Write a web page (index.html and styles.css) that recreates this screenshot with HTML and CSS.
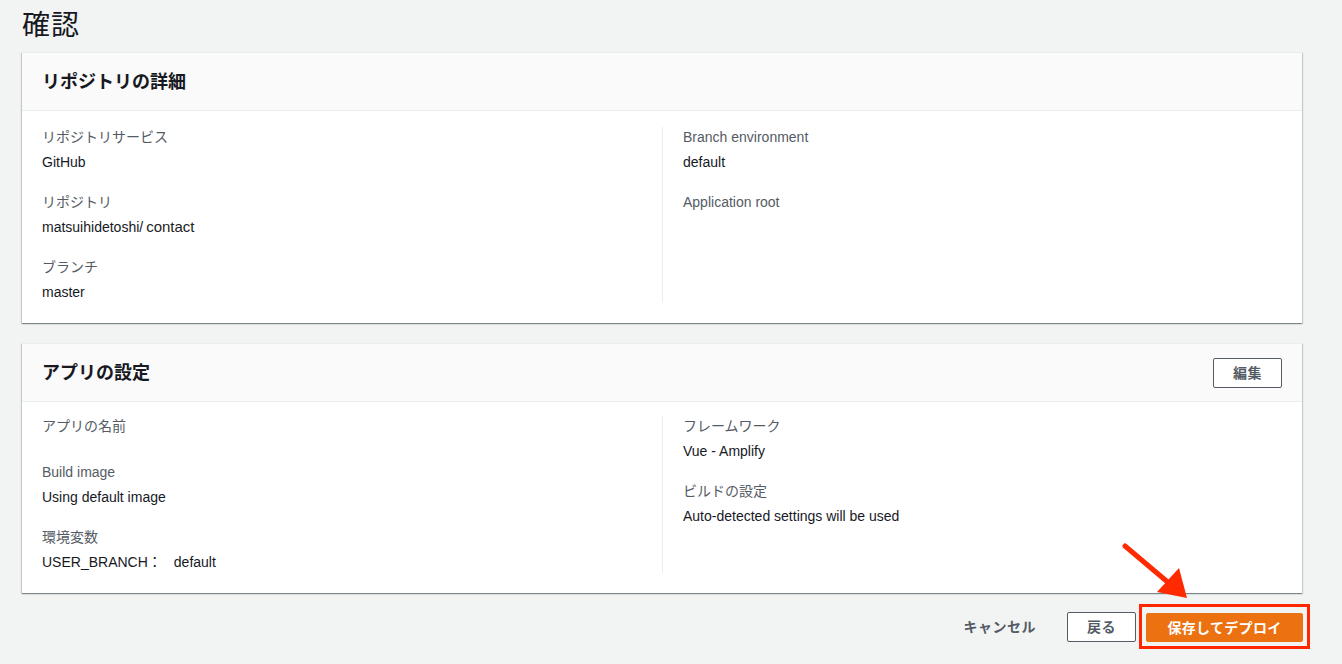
FILE: index.html
```html
<!DOCTYPE html>
<html lang="ja">
<head>
<meta charset="utf-8">
<title>確認</title>
<link rel="stylesheet" href="styles.css">
</head>
<body>
<div class="page">
  <h1 class="title">確認</h1>

  <section class="card">
    <div class="card-header">
      <h2>リポジトリの詳細</h2>
    </div>
    <div class="card-body">
      <div class="col">
        <div class="pair"><div class="label">リポジトリサービス</div><div class="value">GitHub</div></div>
        <div class="pair"><div class="label">リポジトリ</div><div class="value">matsuihidetoshi/<span class="alt">contact</span></div></div>
        <div class="pair"><div class="label">ブランチ</div><div class="value">master</div></div>
      </div>
      <div class="col col-right">
        <div class="pair"><div class="label">Branch environment</div><div class="value">default</div></div>
        <div class="pair"><div class="label">Application root</div><div class="value empty"></div></div>
      </div>
    </div>
  </section>

  <section class="card card-second">
    <div class="card-header">
      <h2>アプリの設定</h2>
      <button class="btn btn-normal">編集</button>
    </div>
    <div class="card-body">
      <div class="col">
        <div class="pair"><div class="label">アプリの名前</div><div class="value empty"></div></div>
        <div class="pair"><div class="label">Build image</div><div class="value">Using default image</div></div>
        <div class="pair"><div class="label">環境変数</div><div class="value">USER_BRANCH：<span class="env-val">default</span></div></div>
      </div>
      <div class="col col-right">
        <div class="pair"><div class="label">フレームワーク</div><div class="value">Vue - Amplify</div></div>
        <div class="pair"><div class="label">ビルドの設定</div><div class="value">Auto-detected settings will be used</div></div>
      </div>
    </div>
  </section>

  <div class="footer">
    <button class="btn btn-link">キャンセル</button>
    <button class="btn btn-normal">戻る</button>
    <span class="highlight"><button class="btn btn-primary">保存してデプロイ</button></span>
  </div>

  <svg class="arrow" width="80" height="70" viewBox="0 0 80 70">
    <line x1="3" y1="3" x2="48" y2="41" stroke="#ff2a00" stroke-width="5" stroke-linecap="round"/>
    <polygon points="35,49 65,55 57,25" fill="#ff2a00"/>
  </svg>
</div>
</body>
</html>
```

FILE: styles.css
```css
html, body {
  margin: 0;
  padding: 0;
  background: #f2f3f3;
}

body {
  font-family: "Liberation Sans", "Noto Sans CJK JP", sans-serif;
  font-size: 14px;
  color: #16191f;
}

.page {
  position: relative;
  padding: 8px 40px 0 22px;
  height: 656px;
}

.title {
  margin: 0 0 8px;
  font-size: 28px;
  line-height: 36px;
  font-weight: 400;
  color: #16191f;
  letter-spacing: 1px;
}

.card {
  background: #fff;
  border-top: 1px solid #eaeded;
  box-shadow: 0 1px 1px 0 rgba(0, 28, 36, 0.3), 1px 1px 1px 0 rgba(0, 28, 36, 0.15), -1px 1px 1px 0 rgba(0, 28, 36, 0.15);
  margin-bottom: 20px;
}

.card.card-second {
  margin-bottom: 11px;
}

.card-header {
  display: flex;
  align-items: center;
  justify-content: space-between;
  height: 57px;
  padding: 0 20px;
  background: #fafafa;
  border-bottom: 1px solid #eaeded;
}

.card-header h2 {
  margin: 0;
  font-size: 18px;
  font-weight: 700;
  line-height: 24px;
  color: #16191f;
}

.card-body {
  display: grid;
  grid-template-columns: 1fr 1fr;
  padding: 16px 20px 20px;
}

.card-second .card-body {
  padding-top: 14px;
}

.col {
  padding-right: 20px;
}

.col-right {
  border-left: 1px solid #eaeded;
  padding-left: 20px;
  padding-right: 0;
}

.pair {
  margin-bottom: 19px;
}

.pair:last-child {
  margin-bottom: 0;
}

.label {
  color: #545b64;
  line-height: 20px;
  margin-bottom: 4px;
}

.value {
  color: #16191f;
  line-height: 22px;
  min-height: 22px;
}

.value.empty {
  min-height: 3px;
  height: 3px;
}

.col-right .pair:last-child .value.empty {
  height: 22px;
}

.alt {
  font-family: "Liberation Sans", sans-serif;
  font-size: 15px;
  margin-left: 3px;
  color: #222;
}

.env-val {
  margin-left: 12px;
}

.btn {
  font-family: "Liberation Sans", "Noto Sans CJK JP", sans-serif;
  font-size: 14px;
  font-weight: 700;
  line-height: 20px;
  border-radius: 2px;
  cursor: pointer;
  letter-spacing: 0.5px;
  white-space: nowrap;
}

.btn-normal {
  background: #fff;
  color: #545b64;
  border: 1px solid #545b64;
  padding: 4px 19px;
  height: 30px;
}

.btn-link {
  background: transparent;
  border: 1px solid transparent;
  color: #545b64;
  padding: 4px 20px;
  height: 30px;
}

.highlight {
  display: inline-flex;
  border: 3px solid #ff2600;
  padding: 6px 4px 4px;
  margin-right: -8px;
  margin-left: -7px;
}

.btn-primary {
  background: #ec7211;
  border: 1px solid #ec7211;
  color: #fff;
  padding: 3px 0;
  height: 29px;
  width: 157px;
  letter-spacing: 0.3px;
}

.footer {
  display: flex;
  justify-content: flex-end;
  align-items: center;
  gap: 10px;
}

.footer .btn-link {
  margin-right: 0;
}

.arrow {
  position: absolute;
  left: 1122px;
  top: 543px;
}
```
